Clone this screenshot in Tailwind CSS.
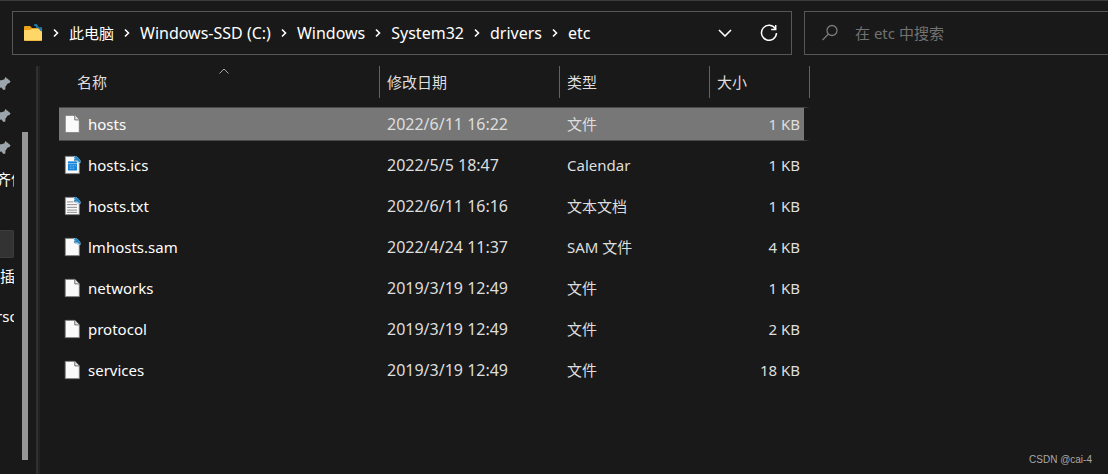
<!DOCTYPE html>
<html lang="zh-CN">
<head>
<meta charset="utf-8">
<meta name="viewport" content="width=device-width, initial-scale=1">
<title>etc</title>
<script src="https://cdn.jsdelivr.net/npm/@tailwindcss/browser@4"></script>
</head>
<body class="flex min-h-screen flex-col overflow-x-hidden border-t border-[#3c3c3c] bg-[#191919] font-['Noto_Sans','Noto_Sans_CJK_SC',sans-serif] text-[15px] leading-5 text-white">
<svg class="hidden" aria-hidden="true">
  <symbol id="sep" viewBox="0 0 8 10"><path d="M2 1.5 5.5 5 2 8.5" fill="none" stroke="#fff" stroke-width="1.6"/></symbol>
  <symbol id="page" viewBox="0 0 18 22"><path d="M1 1.5h10.5l5 5v14H1z" fill="#fafafa" stroke="#777"/><path d="M11.500 1.500v5h5" fill="#e4e4e4" stroke="#666"/></symbol>
  <symbol id="link" viewBox="0 0 8 8"><path d="M0 0h3l5 5v3H5L1 4z" fill="#a9d3ee"/><path d="M1 1 5 3M3 0v5M1 4h5M4 4l4 3M5 2l2 4" stroke="#2b85bd" stroke-width="1.500" fill="none"/></symbol>
  <symbol id="pin" viewBox="0 0 16 16"><path d="m10 1 5.500 4.500-1 2-2 .5L10 11.500l0 3-2 .5-2.500-3L2 14l-1.500-1.500 3-3.500-2-3 1-1.500h3.500l3-1z" fill="#9ca5ac"/></symbol>
</svg>

<header class="flex gap-3 pt-2.5 pl-3">
  <div class="flex h-11 w-[780px] shrink-0 items-center border border-[#575757] pr-3">
    <nav aria-label="路径" class="flex items-center gap-[9px] text-base leading-5 whitespace-nowrap">
      <svg class="ml-2.5 h-[18px] w-5" viewBox="0 0 20 18" aria-hidden="true"><path d="M1 3q0-1 1-1h5l2 2h9q1 0 1 1v4H1z" fill="#eaa21b"/><path d="M1 7q0-1 1-1h5l2-1h9q1 0 1 1v10q0 1-1 1H2q-1 0-1-1z" fill="#ffd768"/><path d="M2 16.500h16" stroke="#efb83f"/><path d="m11 1 4 1m-2-2 1 4m1-1 4 4m-1-4v4" stroke="#2478a5" stroke-width="1.600" fill="none"/></svg>
      <svg class="h-2.5 w-2" aria-hidden="true"><use href="#sep"/></svg>
      <a href="#" class="text-[15px]">此电脑</a>
      <svg class="h-2.5 w-2" aria-hidden="true"><use href="#sep"/></svg>
      <a href="#">Windows-SSD (C:)</a>
      <svg class="h-2.5 w-2" aria-hidden="true"><use href="#sep"/></svg>
      <a href="#">Windows</a>
      <svg class="h-2.5 w-2" aria-hidden="true"><use href="#sep"/></svg>
      <a href="#">System32</a>
      <svg class="h-2.5 w-2" aria-hidden="true"><use href="#sep"/></svg>
      <a href="#">drivers</a>
      <svg class="h-2.5 w-2" aria-hidden="true"><use href="#sep"/></svg>
      <a href="#">etc</a>
    </nav>
    <button type="button" aria-label="以前的位置" class="ml-auto flex size-5 items-center justify-center"><svg class="h-2 w-3.5" viewBox="0 0 14 8"><path d="m1 1 6 6 6-6" fill="none" stroke="#fff" stroke-width="1.600"/></svg></button>
    <button type="button" aria-label="刷新" class="ml-6 flex size-5 items-center justify-center"><svg class="size-[18px]" viewBox="0 0 18 18" fill="none" stroke="#fff" stroke-width="1.500"><path d="M15.500 5A7.500 7.500 0 1 0 16.500 9M15.700 1v4.500h-4.500"/></svg></button>
  </div>
  <label class="flex h-11 min-w-0 grow items-center border border-r-0 border-[#575757] pl-4">
    <svg class="size-[18px] shrink-0" viewBox="0 0 18 18" fill="none" stroke="#7a7a7a" stroke-width="1.300" aria-hidden="true"><circle cx="11" cy="6.500" r="5"/><path d="M7.500 10 1.500 16"/></svg>
    <input type="search" aria-label="在 etc 中搜索" placeholder="在 etc 中搜索" class="ml-4 min-w-0 grow bg-transparent outline-none placeholder:text-[#727272]">
  </label>
</header>

<div class="flex grow">
  <aside class="mt-[11px] flex w-10 shrink-0 border-r-2 border-[#212121]">
    <nav aria-label="快速访问" class="w-3.5 shrink-0 overflow-hidden pt-px whitespace-nowrap">
      <a href="#" aria-label="固定项 1" class="flex h-8 items-center"><svg class="-ml-1 size-[15px] shrink-0"><use href="#pin"/></svg></a>
      <a href="#" aria-label="固定项 2" class="flex h-8 items-center"><svg class="-ml-1 size-[15px] shrink-0"><use href="#pin"/></svg></a>
      <a href="#" aria-label="固定项 3" class="flex h-8 items-center"><svg class="-ml-1 size-[15px] shrink-0"><use href="#pin"/></svg></a>
      <a href="#" class="-ml-1 flex h-8 items-center">齐件</a>
      <a href="#" aria-label="当前项" class="mt-[35px] block h-7 rounded-r-xs border border-l-0 border-[#3c3c3c] bg-[#333]"></a>
      <a href="#" class="mt-0.5 flex h-8 items-center">插</a>
      <a href="#" class="mt-2 -ml-1 flex h-8 items-center">rso</a>
    </nav>
    <div class="mt-[66px] mb-3.5 ml-2 w-1.5 bg-[#969696]"></div>
    <div class="ml-auto w-0.5 bg-[#303030]"></div>
  </aside>

  <main class="flex min-w-0 grow flex-col justify-between pt-1 pl-[19px]">
    <table class="w-[751px] table-fixed border-separate border-spacing-x-0 border-spacing-y-[7px]">
      <colgroup><col class="w-[321px]"><col class="w-[180px]"><col class="w-[150px]"><col class="w-[100px]"></colgroup>
      <thead>
        <tr class="h-[34px] text-left align-top text-[#dedede]">
          <th scope="col" aria-sort="ascending" class="p-0 font-normal"><div class="relative flex h-8 items-center border-r border-[#636363] pl-[18px]">名称<svg class="absolute top-0.5 left-40 h-1.5 w-2.5" viewBox="0 0 10 6" aria-hidden="true"><path d="m.5 5.500 4.500-4.500 4.500 4.500" fill="none" stroke="#aaa"/></svg></div></th>
          <th scope="col" class="p-0 font-normal"><div class="flex h-8 items-center border-r border-[#636363] pl-[7px]">修改日期</div></th>
          <th scope="col" class="p-0 font-normal"><div class="flex h-8 items-center border-r border-[#636363] pl-[7px]">类型</div></th>
          <th scope="col" class="p-0 font-normal"><div class="flex h-8 items-center border-r border-[#636363] pl-[7px]">大小</div></th>
        </tr>
      </thead>
      <tbody class="text-[#dedede] [&_td]:h-[34px] [&_td]:py-0 [&_td]:pr-0 [&_td]:pl-[7px] [&_td:first-child]:pl-[5px] [&_td:first-child]:text-white [&_td:last-child]:border-r-[6px] [&_td:last-child]:border-r-transparent [&_td:last-child]:bg-clip-padding [&_td:last-child]:pr-1 [&_td:last-child]:text-right [&_td:nth-child(2)]:text-base [&_td:nth-child(2)]:leading-5">
        <tr class="[&_td]:border-y [&_td]:border-y-[#4a4a4a] [&_td]:bg-[#777]"><td><div class="flex items-center gap-[7px]"><svg class="h-5 w-[17px]"><use href="#page"/></svg>hosts</div></td><td>2022/6/11 16:22</td><td>文件</td><td>1 KB</td></tr>
        <tr><td><div class="flex items-center gap-[7px]"><svg class="h-5 w-[17px]" viewBox="0 0 18 22"><use href="#page"/><path d="M4 7h10v10H4z" fill="#1683d8"/><path d="M4 9.500h10M6 12h2m1 0h2m1 0h1M6 14.500h2m1 0h2" stroke="#8ac8f4"/><use href="#link" x="10" y="1" width="8" height="8"/></svg>hosts.ics</div></td><td>2022/5/5 18:47</td><td>Calendar</td><td>1 KB</td></tr>
        <tr><td><div class="flex items-center gap-[7px]"><svg class="h-5 w-[17px]" viewBox="0 0 18 22"><use href="#page"/><path d="M3 6.500h7M3 9.500h11M3 12.500h11M3 15.500h11M3 18h11" stroke="#858585"/><use href="#link" x="10" y="1" width="8" height="8"/></svg>hosts.txt</div></td><td>2022/6/11 16:16</td><td>文本文档</td><td>1 KB</td></tr>
        <tr><td><div class="flex items-center gap-[7px]"><svg class="h-5 w-[17px]" viewBox="0 0 18 22"><use href="#page"/><use href="#link" x="10" y="1" width="8" height="8"/></svg>lmhosts.sam</div></td><td>2022/4/24 11:37</td><td>SAM 文件</td><td>4 KB</td></tr>
        <tr><td><div class="flex items-center gap-[7px]"><svg class="h-5 w-[17px]"><use href="#page"/></svg>networks</div></td><td>2019/3/19 12:49</td><td>文件</td><td>1 KB</td></tr>
        <tr><td><div class="flex items-center gap-[7px]"><svg class="h-5 w-[17px]"><use href="#page"/></svg>protocol</div></td><td>2019/3/19 12:49</td><td>文件</td><td>2 KB</td></tr>
        <tr><td><div class="flex items-center gap-[7px]"><svg class="h-5 w-[17px]"><use href="#page"/></svg>services</div></td><td>2019/3/19 12:49</td><td>文件</td><td>18 KB</td></tr>
      </tbody>
    </table>
    <p class="pr-4 pb-1 text-right font-['Liberation_Sans',sans-serif] text-[10px] leading-5 text-[#a8a8a8]">CSDN @cai-4</p>
  </main>
</div>
</body>
</html>
